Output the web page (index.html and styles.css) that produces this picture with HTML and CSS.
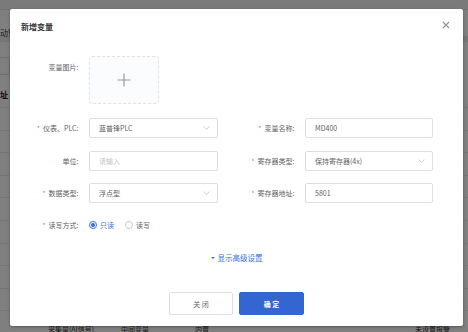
FILE: index.html
```html
<!DOCTYPE html>
<html lang="zh">
<head>
<meta charset="utf-8">
<title>新增变量</title>
<link rel="stylesheet" href="styles.css">
</head>
<body>
<div class="page">
  <div class="topbar"></div>
  <div class="tabs"><span class="tab-text">动管</span></div>
  <div class="band"></div>
  <div class="filter"><div class="fbox"></div></div>
  <div class="addr">址</div>
  <div class="rows">
    <div class="trow"></div>
    <div class="trow"></div>
    <div class="trow"></div>
    <div class="trow"></div>
    <div class="trow"></div>
    <div class="trow"></div>
    <div class="trow"></div>
    <div class="trow"></div>
    <div class="trow"></div>
    <div class="trow last"><span class="c1">采集量(AI信号)</span><span class="c2">中间变量</span><span class="c3">内置</span><span class="c4">未设置报警</span></div>
  </div>
</div>
<div class="mask"></div>
<div class="dialog">
  <div class="dlg-head">
    <span class="dlg-title">新增变量</span>
    <svg class="close" width="8" height="8" viewBox="0 0 8 8"><path d="M1 1L7 7M7 1L1 7" stroke="#909399" stroke-width="1.1" fill="none"/></svg>
  </div>
  <div class="dlg-body">
    <div class="upload-row">
      <div class="label label-top">变量图片:</div>
      <div class="upload">
        <svg width="14" height="14" viewBox="0 0 14 14"><path d="M7 0.5V13.5M0.5 7H13.5" stroke="#8c939d" stroke-width="1.1" fill="none"/></svg>
      </div>
    </div>
    <div class="row first">
      <div class="field">
        <div class="label"><span class="star">*</span>仪表、PLC:</div>
        <div class="input select"><span>蓝普锋PLC</span><svg class="chev" width="7" height="4" viewBox="0 0 7 4"><path d="M0.5 0.5L3.5 3.3L6.5 0.5" stroke="#c0c4cc" stroke-width="0.8" fill="none"/></svg></div>
      </div>
      <div class="field">
        <div class="label"><span class="star">*</span>变量名称:</div>
        <div class="input"><span>MD400</span></div>
      </div>
    </div>
    <div class="row">
      <div class="field">
        <div class="label">单位:</div>
        <div class="input"><span class="ph">请输入</span></div>
      </div>
      <div class="field">
        <div class="label"><span class="star">*</span>寄存器类型:</div>
        <div class="input select"><span>保持寄存器(4x)</span><svg class="chev" width="7" height="4" viewBox="0 0 7 4"><path d="M0.5 0.5L3.5 3.3L6.5 0.5" stroke="#c0c4cc" stroke-width="0.8" fill="none"/></svg></div>
      </div>
    </div>
    <div class="row">
      <div class="field">
        <div class="label"><span class="star">*</span>数据类型:</div>
        <div class="input select"><span>浮点型</span><svg class="chev" width="7" height="4" viewBox="0 0 7 4"><path d="M0.5 0.5L3.5 3.3L6.5 0.5" stroke="#c0c4cc" stroke-width="0.8" fill="none"/></svg></div>
      </div>
      <div class="field">
        <div class="label"><span class="star">*</span>寄存器地址:</div>
        <div class="input"><span>5801</span></div>
      </div>
    </div>
    <div class="row radio-row">
      <div class="label"><span class="star">*</span>读写方式:</div>
      <div class="radios">
        <span class="radio checked"><span class="dot"></span></span><span class="rtext active">只读</span>
        <span class="radio"></span><span class="rtext">读写</span>
      </div>
    </div>
    <div class="more"><span class="tri"></span>显示高级设置</div>
    <div class="footer">
      <button class="btn">关 闭</button>
      <button class="btn primary">确 定</button>
    </div>
  </div>
</div>
</body>
</html>
```
FILE: styles.css
```css
* { box-sizing: border-box; }
html, body { margin: 0; padding: 0; }
body {
  width: 468px;
  height: 332px;
  overflow: hidden;
  font-family: "Noto Sans CJK SC", "Noto Sans", sans-serif;
  background: #fff;
  position: relative;
}
.page { width: 468px; }
.topbar { height: 10px; background: #f4f4f4; border-bottom: 1px solid #e4e4e4; }
.tabs { height: 27px; font-size: 8px; color: #333; line-height: 10px; padding-top: 18px; border-bottom: 1px solid #e8e8e8; }
.tab-text { margin-left: 0; }
.band { height: 5px; background: #ececec; }
.filter { height: 40px; padding-top: 15px; }
.fbox { width: 20px; height: 18px; margin-left: -10px; border: 1px solid #dcdfe6; border-radius: 2px; }
.addr { height: 26px; font-size: 8px; font-weight: bold; color: #222; line-height: 26px; border-bottom: 1px solid #eaeaea; }
.trow { height: 22.6px; border-bottom: 1px solid #ececec; font-size: 7px; color: #333; line-height: 22px; display: flex; }
.trow.last { line-height: 10px; padding-top: 13px; }
.c1 { margin-left: 48px; width: 73px; }
.c2 { width: 74px; }
.c3 { width: 220px; }
.mask { position: absolute; left: 0; top: 0; width: 468px; height: 332px; background: rgba(0,0,0,0.5); }
.dialog {
  position: absolute;
  left: 10px;
  top: 9px;
  width: 453px;
  height: 317px;
  background: #fff;
  border-radius: 2px;
  box-shadow: 0 1px 3px rgba(0,0,0,0.3);
}
.dlg-head { padding: 13px 11px 0; height: 23px; position: relative; }
.dlg-title { font-size: 8px; line-height: 10px; font-weight: bold; color: #303133; display: block; }
.close { position: absolute; right: 13px; top: 12px; }
.dlg-body { padding-top: 24px; }
.upload-row { display: flex; }
.label {
  width: 79px;
  flex: none;
  padding-right: 10.5px;
  text-align: right;
  font-size: 7px;
  line-height: 20px;
  height: 20px;
  color: #606266;
  white-space: nowrap;
}
.label-top { padding-top: 1px; }
.star { color: #f56c6c; margin-right: 3px; }
.upload {
  width: 70px;
  height: 48px;
  border: 1px dashed #dfe2e8;
  border-radius: 3px;
  background: #fbfcfe;
  display: flex;
  align-items: center;
  justify-content: center;
}
.row { display: flex; margin-top: 12.5px; }
.row.first { margin-top: 14px; }
.field { width: 216px; display: flex; }
.input {
  width: 129px;
  height: 20px;
  border: 1px solid #dcdfe6;
  border-radius: 2px;
  padding-left: 9px;
  padding-right: 7px;
  font-size: 7px;
  line-height: 18px;
  color: #606266;
  display: flex;
  align-items: center;
  justify-content: space-between;
}
.field + .field .input { width: 128px; }
.ph { color: #c0c4cc; }
.chev { flex: none; }
.radio-row { margin-top: 12px; align-items: center; }
.radios { display: flex; align-items: center; height: 20px; }
.radio {
  width: 8px;
  height: 8px;
  border: 1px solid #c8ccd4;
  border-radius: 50%;
  display: flex;
  align-items: center;
  justify-content: center;
}
.radio.checked { border-color: #3a72dd; }
.dot { width: 3.5px; height: 3.5px; border-radius: 50%; background: #3a72dd; }
.rtext { font-size: 7px; color: #606266; margin-left: 3px; margin-right: 11px; line-height: 20px; }
.rtext.active { color: #3a72dd; }
.more {
  margin-top: 18px;
  font-size: 7.5px;
  line-height: 10px;
  color: #3a72dd;
  display: flex;
  justify-content: center;
  align-items: center;
}
.tri { width: 0; height: 0; border-left: 2px solid transparent; border-right: 2px solid transparent; border-top: 2.5px solid #3a72dd; margin-right: 3px; }
.footer { display: flex; justify-content: center; gap: 6px; margin-top: 29px; }
.btn {
  width: 64px;
  height: 23px;
  border: 1px solid #dcdfe6;
  background: #fff;
  border-radius: 2px;
  font-family: "Noto Sans CJK SC", "Noto Sans", sans-serif;
  font-size: 7px;
  color: #606266;
  padding: 0;
}
.btn.primary { width: 65px; background: #3466d2; border-color: #3466d2; color: #fff; font-weight: bold; }
```
